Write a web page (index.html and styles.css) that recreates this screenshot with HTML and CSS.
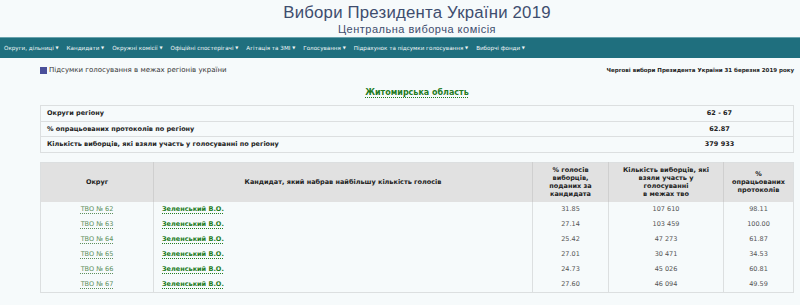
FILE: index.html
```html
<!DOCTYPE html>
<html lang="uk">
<head>
    <meta charset="UTF-8">
    <title>Вибори Президента України 2019</title>
    <link rel="stylesheet" href="styles.css">
</head>
<body>
    <header class="site-header">
        <div class="site-title">Вибори Президента України 2019</div>
        <div class="site-subtitle">Центральна виборча комісія</div>
    </header>

    <nav class="main-nav">
        <a href="#">Округи, дільниці <span class="caret">▼</span></a>
        <a href="#">Кандидати <span class="caret">▼</span></a>
        <a href="#">Окружні комісії <span class="caret">▼</span></a>
        <a href="#">Офіційні спостерігачі <span class="caret">▼</span></a>
        <a href="#">Агітація та ЗМІ <span class="caret">▼</span></a>
        <a href="#">Голосування <span class="caret">▼</span></a>
        <a href="#">Підрахунок та підсумки голосування <span class="caret">▼</span></a>
        <a href="#">Виборчі фонди <span class="caret">▼</span></a>
    </nav>

    <div class="content">
        <div class="page-bar">
            <div class="page-caption"><span class="marker"></span>Підсумки голосування в межах регіонів україни</div>
            <div class="election-name">Чергові вибори Президента України 31 березня 2019 року</div>
        </div>

        <h2 class="region-title"><a href="#">Житомирська область</a></h2>

        <table class="summary">
            <tr><th>Округи регіону</th><td>62 - 67</td></tr>
            <tr><th>% опрацьованих протоколів по регіону</th><td>62.87</td></tr>
            <tr><th>Кількість виборців, які взяли участь у голосуванні по регіону</th><td>379 933</td></tr>
        </table>

        <table class="results">
            <thead>
                <tr>
                    <th class="col-district">Округ</th>
                    <th class="col-candidate">Кандидат, який набрав найбільшу кількість голосів</th>
                    <th class="col-percent">% голосів виборців, поданих за кандидата</th>
                    <th class="col-voters">Кількість виборців, які<br>взяли участь у<br>голосуванні<br>в межах тво</th>
                    <th class="col-processed">%<br>опрацьованих<br>протоколів</th>
                </tr>
            </thead>
            <tbody>
                <tr><td class="district"><a href="#">ТВО № 62</a></td><td class="candidate"><a href="#">Зеленський В.О.</a></td><td>31.85</td><td>107 610</td><td>98.11</td></tr>
                <tr><td class="district"><a href="#">ТВО № 63</a></td><td class="candidate"><a href="#">Зеленський В.О.</a></td><td>27.14</td><td>103 459</td><td>100.00</td></tr>
                <tr><td class="district"><a href="#">ТВО № 64</a></td><td class="candidate"><a href="#">Зеленський В.О.</a></td><td>25.42</td><td>47 273</td><td>61.87</td></tr>
                <tr><td class="district"><a href="#">ТВО № 65</a></td><td class="candidate"><a href="#">Зеленський В.О.</a></td><td>27.01</td><td>30 471</td><td>34.53</td></tr>
                <tr><td class="district"><a href="#">ТВО № 66</a></td><td class="candidate"><a href="#">Зеленський В.О.</a></td><td>24.73</td><td>45 026</td><td>60.81</td></tr>
                <tr><td class="district"><a href="#">ТВО № 67</a></td><td class="candidate"><a href="#">Зеленський В.О.</a></td><td>27.60</td><td>46 094</td><td>49.59</td></tr>
            </tbody>
        </table>
    </div>
</body>
</html>
```

FILE: styles.css
```css
body {
    margin: 0;
    padding: 0;
    font-family: "DejaVu Sans", Verdana, sans-serif;
    background: #f6fafb;
    color: #333;
}

.site-header {
    height: 37px;
    padding-left: 34px;
    text-align: center;
    font-family: "Liberation Sans", Arial, sans-serif;
    color: #3e4d6e;
}

.site-title {
    padding-top: 3px;
    font-size: 16.8px;
    line-height: 20px;
    letter-spacing: 0.2px;
}

.site-subtitle {
    font-size: 11px;
    line-height: 12px;
    letter-spacing: 0.5px;
}

.main-nav {
    display: flex;
    align-items: center;
    gap: 8px;
    height: 20px;
    padding: 0 4px;
    background: #1f6f7e;
    border-top: 1px solid #6aa3ad;
}

.main-nav a {
    color: #f2f7f8;
    font-size: 5.6px;
    text-decoration: none;
    white-space: nowrap;
}

.main-nav .caret {
    font-size: 4px;
    vertical-align: 1px;
}

.content {
    padding: 0 6px 0 40px;
}

.page-bar {
    display: flex;
    justify-content: space-between;
    align-items: center;
    height: 24px;
}

.page-caption {
    display: flex;
    align-items: center;
    font-size: 7px;
    color: #333;
}

.marker {
    width: 7px;
    height: 7px;
    margin-right: 2px;
    background: #4a4f9a;
}

.election-name {
    font-size: 5.5px;
    font-weight: bold;
    color: #222;
}

.region-title {
    margin: 3px 0 0;
    height: 20px;
    line-height: 16px;
    text-align: center;
    font-size: 8px;
}

.region-title a,
.results a {
    color: #227a22;
    text-decoration: underline dotted;
    text-underline-offset: 2px;
}

table {
    width: 100%;
    border-collapse: collapse;
    font-size: 6.5px;
}

.summary {
    margin-bottom: 9px;
    border: 1px solid #dcdfe0;
}

.summary tr {
    border-bottom: 1px solid #dcdfe0;
}

.summary th {
    height: 14.6px;
    padding: 0 6px;
    text-align: left;
    color: #222;
}

.summary td {
    width: 145px;
    text-align: center;
    font-weight: bold;
    color: #222;
}

.results {
    border: 1px solid #dcdfe0;
}

.results th {
    height: 39px;
    padding: 0 4px;
    background: #e1e1e1;
    border-left: 1px solid #cfcfcf;
    color: #222;
    line-height: 8px;
    font-weight: bold;
}

.results th:first-child {
    border-left: none;
}

.col-district { width: 104px; }
.col-candidate { width: 370px; }
.col-percent { width: 67px; }
.col-voters { width: 106px; }

.results td {
    height: 15px;
    padding: 0 4px;
    text-align: center;
    color: #555;
    border-left: 1px solid #dcdfe0;
}

.results td:first-child {
    border-left: none;
}

.results td.district a {
    color: #5d8f5d;
}

.results td.candidate {
    text-align: left;
    padding-left: 8px;
    font-weight: bold;
}
```
